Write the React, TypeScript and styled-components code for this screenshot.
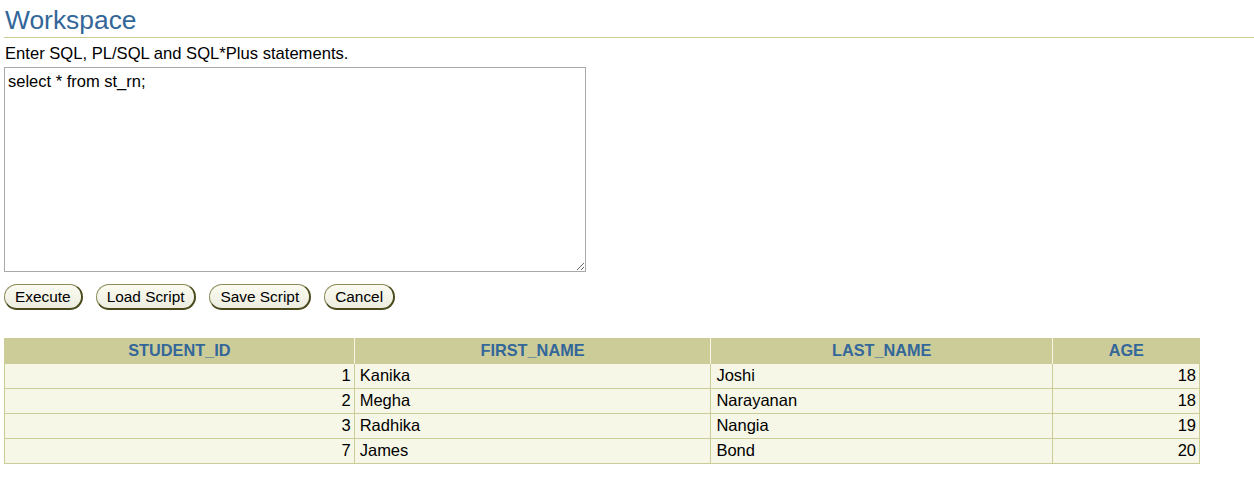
import React from "react";
import styled, { createGlobalStyle } from "styled-components";

const Global = createGlobalStyle`
  html, body { margin: 0; padding: 0; background: #ffffff; }
  body { font-family: Arial, "Liberation Sans", sans-serif; color: #000; }
`;

const Page = styled.div`
  padding: 4px 0 0 4px;
  display: flex;
  flex-direction: column;
`;

const Title = styled.h1`
  margin: 0;
  padding: 0 0 0 1px;
  font-size: 26.4px;
  font-weight: normal;
  line-height: 33px;
  color: #336699;
  border-bottom: 1px solid #cccc99;
`;

const Intro = styled.div`
  font-size: 16.6px;
  line-height: 19px;
  margin-top: 6px;
  padding-left: 1px;
`;

const Editor = styled.textarea`
  margin-top: 4px;
  width: 582px;
  height: 205px;
  box-sizing: border-box;
  border: 1px solid #a9a9a9;
  padding: 4px 3px;
  font-family: Arial, "Liberation Sans", sans-serif;
  font-size: 16.5px;
  line-height: 19px;
  color: #000;
  resize: both;
  outline: none;
`;

const Toolbar = styled.div`
  display: flex;
  gap: 13px;
  margin-top: 12px;
`;

const PillButton = styled.button`
  height: 26px;
  box-sizing: border-box;
  padding: 0 10px 0 10px;
  border-radius: 13px;
  border: 1px solid #8c8c5c;
  border-right: 2px solid #4a4a1c;
  border-bottom: 2px solid #4a4a1c;
  background: linear-gradient(#fbfbf0, #ecece0);
  font-family: Arial, "Liberation Sans", sans-serif;
  font-size: 15.4px;
  color: #000;
  line-height: 20px;
  cursor: pointer;
`;

const Grid = styled.table`
  margin-top: 28px;
  width: 1196px;
  border-collapse: collapse;
  font-family: Arial, "Liberation Sans", sans-serif;
`;

const HeadCell = styled.th<{ $w: number }>`
  width: ${(p) => p.$w}px;
  height: 25px;
  box-sizing: border-box;
  padding: 0 4px;
  background: #cccc99;
  color: #336699;
  font-size: 16.3px;
  font-weight: bold;
  text-align: center;
  border-left: 1px solid #f7f7e7;
  &:first-child { border-left: 1px solid #cccc99; }
`;

const Cell = styled.td<{ $num?: boolean }>`
  height: 25px;
  box-sizing: border-box;
  padding: 0 5px;
  background: #f7f7e7;
  border: 1px solid #cccc99;
  font-size: 16.5px;
  text-align: ${(p) => (p.$num ? "right" : "left")};
  padding-right: ${(p) => (p.$num ? "3px" : "5px")};
`;

const columns = [
  { name: "STUDENT_ID", w: 350 },
  { name: "FIRST_NAME", w: 357 },
  { name: "LAST_NAME", w: 342 },
  { name: "AGE", w: 147 },
];

const rows = [
  [1, "Kanika", "Joshi", 18],
  [2, "Megha", "Narayanan", 18],
  [3, "Radhika", "Nangia", 19],
  [7, "James", "Bond", 20],
];

export default function App() {
  return (
    <Page>
      <Global />
      <Title>Workspace</Title>
      <Intro>Enter SQL, PL/SQL and SQL*Plus statements.</Intro>
      <Editor defaultValue="select * from st_rn;" spellCheck={false} />
      <Toolbar>
        <PillButton>Execute</PillButton>
        <PillButton>Load Script</PillButton>
        <PillButton>Save Script</PillButton>
        <PillButton>Cancel</PillButton>
      </Toolbar>
      <Grid>
        <thead>
          <tr>
            {columns.map((c) => (
              <HeadCell key={c.name} $w={c.w}>
                {c.name}
              </HeadCell>
            ))}
          </tr>
        </thead>
        <tbody>
          {rows.map((r) => (
            <tr key={r[0]}>
              <Cell $num>{r[0]}</Cell>
              <Cell>{r[1]}</Cell>
              <Cell>{r[2]}</Cell>
              <Cell $num>{r[3]}</Cell>
            </tr>
          ))}
        </tbody>
      </Grid>
    </Page>
  );
}
